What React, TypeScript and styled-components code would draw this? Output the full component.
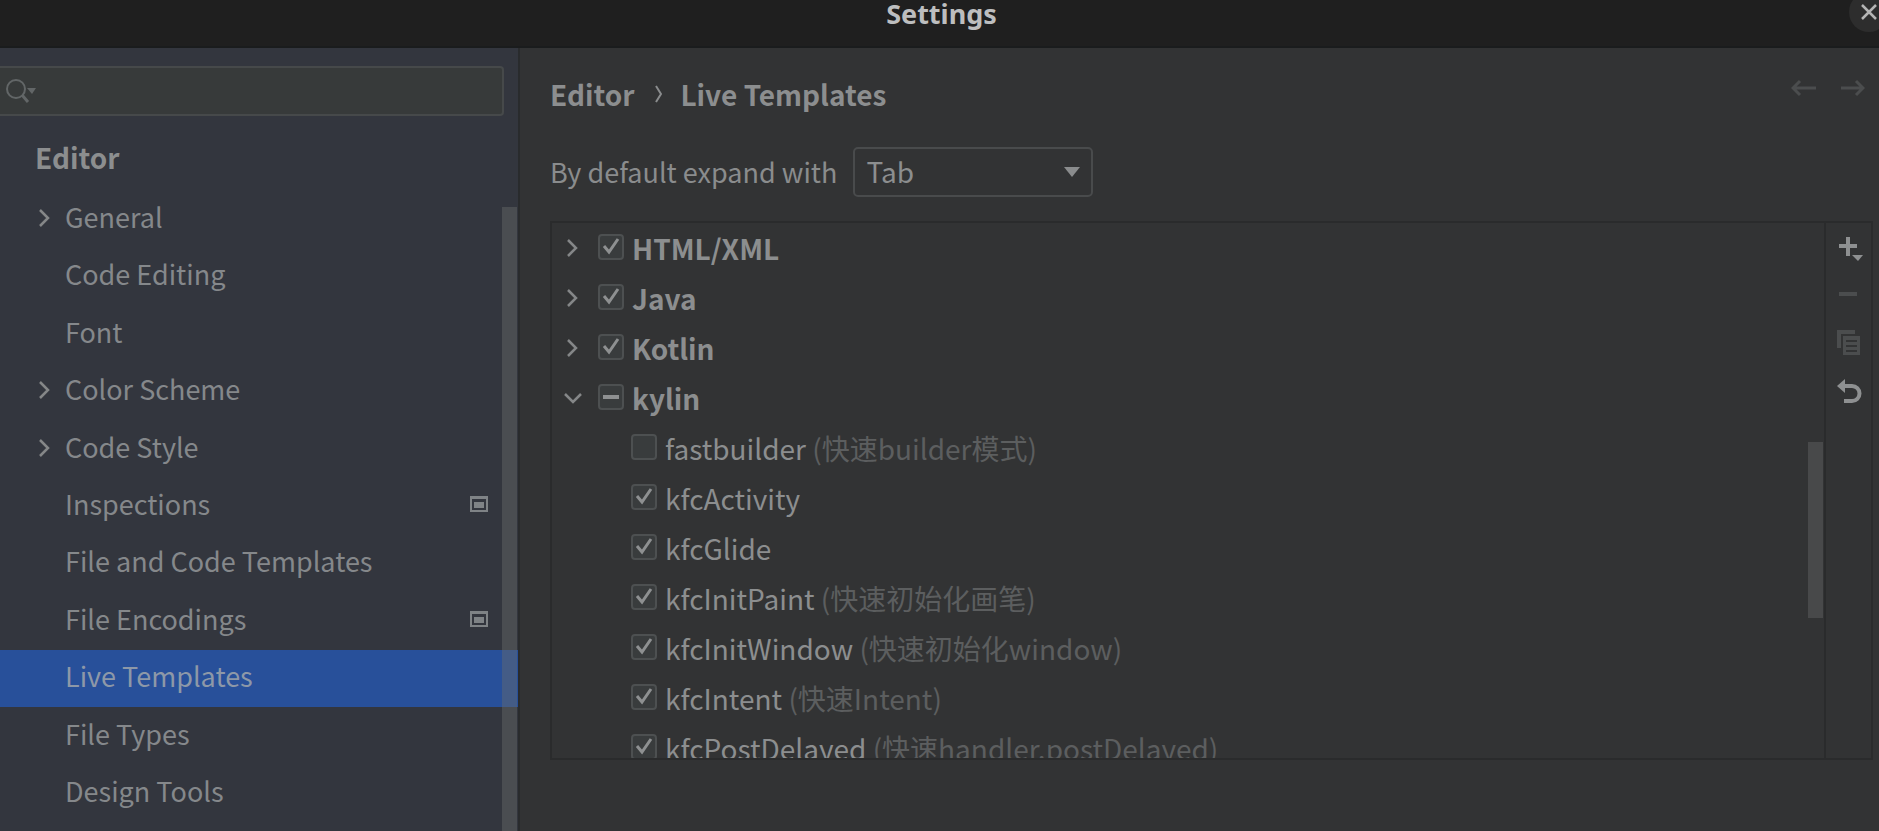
import React, { useEffect, useRef, useState } from "react";
import styled, { createGlobalStyle } from "styled-components";

const GlobalStyle = createGlobalStyle`
  *, *::before, *::after { box-sizing: border-box; }
  body {
    margin: 0;
    background: #323334;
    color: #8c8e8f;
    font-family: "Noto Sans CJK SC", "Noto Sans", sans-serif;
    font-size: 28px;
    line-height: 40px;
  }
  button, input, select { font: inherit; color: inherit; }
`;

const Window = styled.div`
  display: flex;
  flex-direction: column;
  height: 100vh;
  min-height: 480px;
  overflow: hidden;
`;

const TitleBar = styled.header`
  display: grid;
  grid-template-columns: 1fr auto 1fr;
  height: 48px;
  flex: none;
  background: #1f1f1f;
  border-bottom: 2px solid #1a1c1d;
`;

const Title = styled.h1`
  grid-column: 2;
  margin: 0;
  padding-left: 4px;
  font: 700 27px/28px "Noto Sans", sans-serif;
  color: #bdbebf;
`;

const CloseButton = styled.button`
  justify-self: end;
  display: flex;
  align-items: center;
  justify-content: center;
  width: 40px;
  height: 40px;
  margin: -8px -10px 0 0;
  padding: 0;
  border: 0;
  border-radius: 50%;
  background: #2d2d2d;
  color: #b4b4b4;
`;

const Body = styled.div`
  display: flex;
  flex: 1;
  min-height: 0;
`;

const Sidebar = styled.aside`
  display: flex;
  flex-direction: column;
  width: 520px;
  flex: none;
  padding-top: 18px;
  background: #33363e;
  border-right: 2px solid #292b2d;
`;

const SearchBox = styled.label`
  display: flex;
  align-items: center;
  height: 50px;
  margin-right: 14px;
  padding-left: 6px;
  background: #373a3a;
  border: 2px solid #46494a;
  border-left: 0;
  border-radius: 0 4px 4px 0;
  color: #626667;
`;

const SearchInput = styled.input`
  flex: 1;
  min-width: 0;
  padding: 0 8px;
  border: 0;
  outline: 0;
  background: transparent;
`;

const SidebarHeading = styled.h2`
  margin: 20px 0 0;
  padding-left: 35px;
  height: 54px;
  font-size: 28px;
  line-height: 42px;
  font-weight: 700;
`;

const NavArea = styled.div`
  position: relative;
  flex: 1;
  min-height: 0;
`;

const NavList = styled.nav`
  display: grid;
  grid-auto-rows: 1fr;
  height: 100%;
  padding-bottom: 9px;
`;

const NavItem = styled.a<{ $selected?: boolean }>`
  display: grid;
  grid-template-columns: 30px 1fr 18px;
  align-items: center;
  padding: 0 30px 4px 35px;
  font-size: 27px;
  color: ${(p) => (p.$selected ? "#8d98a8" : "#85888b")};
  background: ${(p) => (p.$selected ? "#28509a" : "transparent")};
  text-decoration: none;
`;

const ScrollThumb = styled.div<{ $area: "nav" | "list" }>`
  position: absolute;
  width: 15px;
  right: 1px;
  background: ${(p) => (p.$area === "nav" ? "rgba(108, 110, 108, 0.42)" : "#48494a")};
  top: ${(p) => (p.$area === "nav" ? "17px" : "219px")};
  ${(p) => (p.$area === "nav" ? "bottom: 0;" : "height: 176px;")}
`;

const Main = styled.main`
  display: flex;
  flex-direction: column;
  flex: 1;
  min-width: 0;
  padding: 26px 6px 71px 30px;
`;

const PageHeader = styled.div`
  display: flex;
  justify-content: space-between;
  align-items: flex-start;
`;

const Breadcrumb = styled.nav`
  display: flex;
  align-items: center;
  font-weight: 700;
  gap: 18px;
`;

const Crumb = styled.a`
  color: inherit;
  text-decoration: none;
`;

const History = styled.div`
  display: flex;
  gap: 24px;
  padding: 2px 8px 0 0;
`;

const IconButton = styled.button`
  display: flex;
  padding: 0;
  border: 0;
  background: none;
  color: #8e9091;
  &:disabled { color: #4b4d4e; }
`;

const ExpandRow = styled.div`
  display: flex;
  align-items: center;
  gap: 16px;
  margin: 33px 0 24px;
`;

const ExpandLabel = styled.label`
  font-size: 27px;
  color: #8a8c8d;
`;

const SelectWrap = styled.div`
  display: grid;
  align-items: center;
  width: 240px;
`;

const Select = styled.select`
  grid-area: 1 / 1;
  height: 50px;
  padding: 0 40px 2px 11px;
  appearance: none;
  border: 2px solid #494b4c;
  border-radius: 5px;
  background: #323334;
`;

const SelectArrow = styled.svg`
  grid-area: 1 / 1;
  justify-self: end;
  margin-right: 13px;
  pointer-events: none;
`;

const Panel = styled.section`
  display: flex;
  flex: 1;
  min-height: 0;
  border: 2px solid #2a2b2c;
`;

const ListArea = styled.div`
  position: relative;
  flex: 1;
  min-width: 0;
`;

const TemplateList = styled.ul`
  height: 100%;
  margin: 0;
  padding: 0;
  list-style: none;
  overflow: hidden;
`;

const TemplateRow = styled.li<{ $child?: boolean }>`
  display: flex;
  align-items: center;
  height: 50px;
  padding-left: ${(p) => (p.$child ? "79px" : "11px")};
  font-weight: ${(p) => (p.$child ? 400 : 700)};
`;

const Twisty = styled.button`
  display: flex;
  width: 35px;
  padding: 0;
  border: 0;
  background: none;
`;

const CheckLabel = styled.label`
  display: flex;
  align-items: center;
  gap: 8px;
  white-space: nowrap;
`;

const CheckWrap = styled.span`
  display: grid;
  width: 26px;
  height: 26px;
  margin-bottom: 3px;
`;

const CheckInput = styled.input`
  grid-area: 1 / 1;
  margin: 0;
  width: 26px;
  height: 26px;
  appearance: none;
  background: #393c3d;
  border: 2px solid #4d5051;
  border-radius: 4px;
`;

const CheckMark = styled.svg`
  grid-area: 1 / 1;
  pointer-events: none;
`;

const Description = styled.span`
  color: #5c5e5f;
`;

const Toolbar = styled.div`
  display: flex;
  flex-direction: column;
  align-items: center;
  gap: 16px;
  width: 47px;
  padding: 11px 0 0 3px;
  border-left: 2px solid #2a2b2c;
`;

const ChevronRight = () => (
  <svg width="20" height="20" viewBox="0 0 20 20" fill="none" stroke="#858788" strokeWidth="2.5">
    <path d="M5 2l8 8-8 8" />
  </svg>
);

const ChevronDown = () => (
  <svg width="20" height="20" viewBox="0 0 20 20" fill="none" stroke="#858788" strokeWidth="2.5">
    <path d="M2 6l8 8 8-8" />
  </svg>
);

const ProjectIcon = () => (
  <svg width="18" height="16" viewBox="0 0 18 16" role="img" aria-label="Project level">
    <path fill="none" stroke="#7f8386" strokeWidth="2" d="M1 2h16v13H1z" />
    <path fill="#7f8386" d="M0 0h18v3H0zM4 6h10v6H4z" />
  </svg>
);

type Nav = { label: string; expandable?: boolean; project?: boolean };

const navItems: Nav[] = [
  { label: "General", expandable: true },
  { label: "Code Editing" },
  { label: "Font" },
  { label: "Color Scheme", expandable: true },
  { label: "Code Style", expandable: true },
  { label: "Inspections", project: true },
  { label: "File and Code Templates" },
  { label: "File Encodings", project: true },
  { label: "Live Templates" },
  { label: "File Types" },
  { label: "Design Tools" },
];

type State = "on" | "off" | "mixed";
type Template = { name: string; note?: string; state: State; child?: boolean; open?: boolean };

const templates: Template[] = [
  { name: "HTML/XML", state: "on" },
  { name: "Java", state: "on" },
  { name: "Kotlin", state: "on" },
  { name: "kylin", state: "mixed", open: true },
  { name: "fastbuilder", note: "(快速builder模式)", state: "off", child: true },
  { name: "kfcActivity", state: "on", child: true },
  { name: "kfcGlide", state: "on", child: true },
  { name: "kfcInitPaint", note: "(快速初始化画笔)", state: "on", child: true },
  { name: "kfcInitWindow", note: "(快速初始化window)", state: "on", child: true },
  { name: "kfcIntent", note: "(快速Intent)", state: "on", child: true },
  { name: "kfcPostDelayed", note: "(快速handler.postDelayed)", state: "on", child: true },
];

function Checkbox({ id, initial }: { id: string; initial: State }) {
  const [state, setState] = useState<State>(initial);
  const ref = useRef<HTMLInputElement>(null);
  useEffect(() => {
    if (ref.current) ref.current.indeterminate = state === "mixed";
  }, [state]);
  return (
    <CheckWrap>
      <CheckInput
        ref={ref}
        id={id}
        type="checkbox"
        checked={state === "on"}
        onChange={() => setState(state === "on" ? "off" : "on")}
      />
      <CheckMark width="26" height="26" viewBox="0 0 26 26" fill="none" stroke="#8e9091">
        {state === "on" && <path strokeWidth="3" d="M6 12l5 6 9-13" />}
        {state === "mixed" && <path strokeWidth="4" d="M5 13h16" />}
      </CheckMark>
    </CheckWrap>
  );
}

export default function App() {
  return (
    <Window>
      <GlobalStyle />
      <TitleBar>
        <Title>Settings</Title>
        <CloseButton aria-label="Close">
          <svg width="16" height="16" viewBox="0 0 16 16" fill="none" stroke="currentColor" strokeWidth="2.5">
            <path d="M1 1l14 14M15 1L1 15" />
          </svg>
        </CloseButton>
      </TitleBar>
      <Body>
        <Sidebar>
          <SearchBox>
            <svg width="30" height="26" viewBox="0 0 30 26" fill="none" stroke="currentColor" strokeWidth="2">
              <circle cx="10" cy="11" r="9" />
              <path strokeWidth="3" d="M16 17l6 7" />
              <path fill="currentColor" stroke="none" d="M21 10h9l-4 6z" />
            </svg>
            <SearchInput type="text" aria-label="Search settings" />
          </SearchBox>
          <SidebarHeading>Editor</SidebarHeading>
          <NavArea>
            <NavList aria-label="Editor settings">
              {navItems.map((item) => (
                <NavItem key={item.label} href="#" $selected={item.label === "Live Templates"}>
                  <span>{item.expandable && <ChevronRight />}</span>
                  <span>{item.label}</span>
                  {item.project && <ProjectIcon />}
                </NavItem>
              ))}
            </NavList>
            <ScrollThumb $area="nav" />
          </NavArea>
        </Sidebar>
        <Main>
          <PageHeader>
            <Breadcrumb aria-label="Breadcrumb">
              <Crumb href="#">Editor</Crumb>
              <svg width="10" height="18" viewBox="0 0 10 18" fill="none" stroke="#8a8c8d" strokeWidth="2">
                <path d="M4 1l5 8-5 8" />
              </svg>
              <Crumb href="#">Live Templates</Crumb>
            </Breadcrumb>
            <History>
              <IconButton disabled aria-label="Back">
                <svg width="25" height="24" viewBox="0 0 25 24" fill="none" stroke="currentColor" strokeWidth="3">
                  <path d="M9 5l-7 7 7 7M2 12h23" />
                </svg>
              </IconButton>
              <IconButton disabled aria-label="Forward">
                <svg width="25" height="24" viewBox="0 0 25 24" fill="none" stroke="currentColor" strokeWidth="3">
                  <path d="M16 5l7 7-7 7M23 12H1" />
                </svg>
              </IconButton>
            </History>
          </PageHeader>
          <ExpandRow>
            <ExpandLabel htmlFor="expand">By default expand with</ExpandLabel>
            <SelectWrap>
              <Select id="expand" defaultValue="Tab">
                <option>Tab</option>
                <option>Enter</option>
                <option>Space</option>
              </Select>
              <SelectArrow width="16" height="10" viewBox="0 0 16 10">
                <path fill="#8a8c8d" d="M0 0h16L8 10z" />
              </SelectArrow>
            </SelectWrap>
          </ExpandRow>
          <Panel>
            <ListArea>
              <TemplateList>
                {templates.map((t) => (
                  <TemplateRow key={t.name} $child={t.child}>
                    {!t.child && (
                      <Twisty aria-label={t.name} aria-expanded={!!t.open}>
                        {t.open ? <ChevronDown /> : <ChevronRight />}
                      </Twisty>
                    )}
                    <CheckLabel htmlFor={t.name}>
                      <Checkbox id={t.name} initial={t.state} />
                      <span>
                        {t.name} {t.note && <Description>{t.note}</Description>}
                      </span>
                    </CheckLabel>
                  </TemplateRow>
                ))}
              </TemplateList>
              <ScrollThumb $area="list" />
            </ListArea>
            <Toolbar>
              <IconButton aria-label="Add">
                <svg width="32" height="32" viewBox="0 0 32 32" fill="none" stroke="currentColor" strokeWidth="4">
                  <path d="M14 3v19M5 12h18" />
                  <path fill="currentColor" stroke="none" d="M18 21h11l-5 6z" />
                </svg>
              </IconButton>
              <IconButton disabled aria-label="Remove">
                <svg width="32" height="32" viewBox="0 0 32 32" fill="none" stroke="currentColor" strokeWidth="4">
                  <path d="M5 12h18" />
                </svg>
              </IconButton>
              <IconButton disabled aria-label="Duplicate">
                <svg width="32" height="32" viewBox="0 0 32 32">
                  <path fill="currentColor" d="M3 0h18v4H7v14H3z" />
                  <path fill="currentColor" fillRule="evenodd" d="M9 6h17v19H9zM12 10v2h11v-2zM12 15v2h11v-2zM12 20v2h11v-2z" />
                </svg>
              </IconButton>
              <IconButton aria-label="Revert">
                <svg width="32" height="32" viewBox="0 0 32 32" fill="none" stroke="currentColor" strokeWidth="4">
                  <path d="M8 8h10a7 7 0 0 1 0 15h-8" />
                  <path fill="currentColor" stroke="none" d="M3 8l8-7v14z" />
                </svg>
              </IconButton>
            </Toolbar>
          </Panel>
        </Main>
      </Body>
    </Window>
  );
}
